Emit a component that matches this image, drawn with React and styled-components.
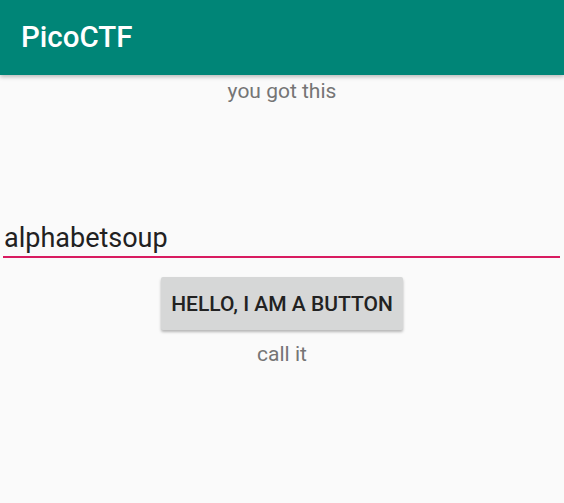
import styled, { createGlobalStyle } from "styled-components";

const Global = createGlobalStyle`
  html, body {
    margin: 0;
    padding: 0;
    background: #fafafa;
    font-family: Roboto, "Noto Sans", sans-serif;
  }
`;

const Screen = styled.div`
  width: 564px;
  height: 503px;
  background: #fafafa;
  display: flex;
  flex-direction: column;
  overflow: hidden;
`;

const AppBar = styled.header`
  height: 75px;
  background: #008577;
  display: flex;
  align-items: center;
  padding: 0 21px;
  box-shadow: 0 2px 4px rgba(0, 0, 0, 0.25);
  position: relative;
  z-index: 1;
`;

const Title = styled.h1`
  margin: 0;
  color: #fff;
  font-size: 29.5px;
  font-weight: 500;
  padding-bottom: 1px;
`;

const Content = styled.main`
  display: flex;
  flex-direction: column;
  align-items: center;
`;

const Hint = styled.p`
  margin: ${(p) => p.$margin};
  color: #757575;
  font-size: 21px;
  line-height: 24px;
`;

const Field = styled.div`
  align-self: stretch;
  margin: 120px 4px 0 3px;
  border-bottom: 2px solid #d81b60;
  padding: 0 0 3px 1px;
`;

const Input = styled.input`
  border: none;
  outline: none;
  background: transparent;
  width: 100%;
  padding: 0;
  font-family: inherit;
  font-size: 27px;
  line-height: 30px;
  color: #212121;
`;

const Button = styled.button`
  margin-top: 19px;
  width: 242px;
  height: 53px;
  border: none;
  border-radius: 2px;
  background: #d6d7d7;
  box-shadow: 0 2px 3px rgba(0, 0, 0, 0.28);
  font-family: inherit;
  font-size: 21px;
  font-weight: 500;
  color: #222;
  text-transform: uppercase;
`;

export default function App() {
  return (
    <Screen>
      <Global />
      <AppBar>
        <Title>PicoCTF</Title>
      </AppBar>
      <Content>
        <Hint $margin="4px 0 0">you got this</Hint>
        <Field>
          <Input defaultValue="alphabetsoup" />
        </Field>
        <Button>Hello, I am a button</Button>
        <Hint $margin="12px 0 0">call it</Hint>
      </Content>
    </Screen>
  );
}
